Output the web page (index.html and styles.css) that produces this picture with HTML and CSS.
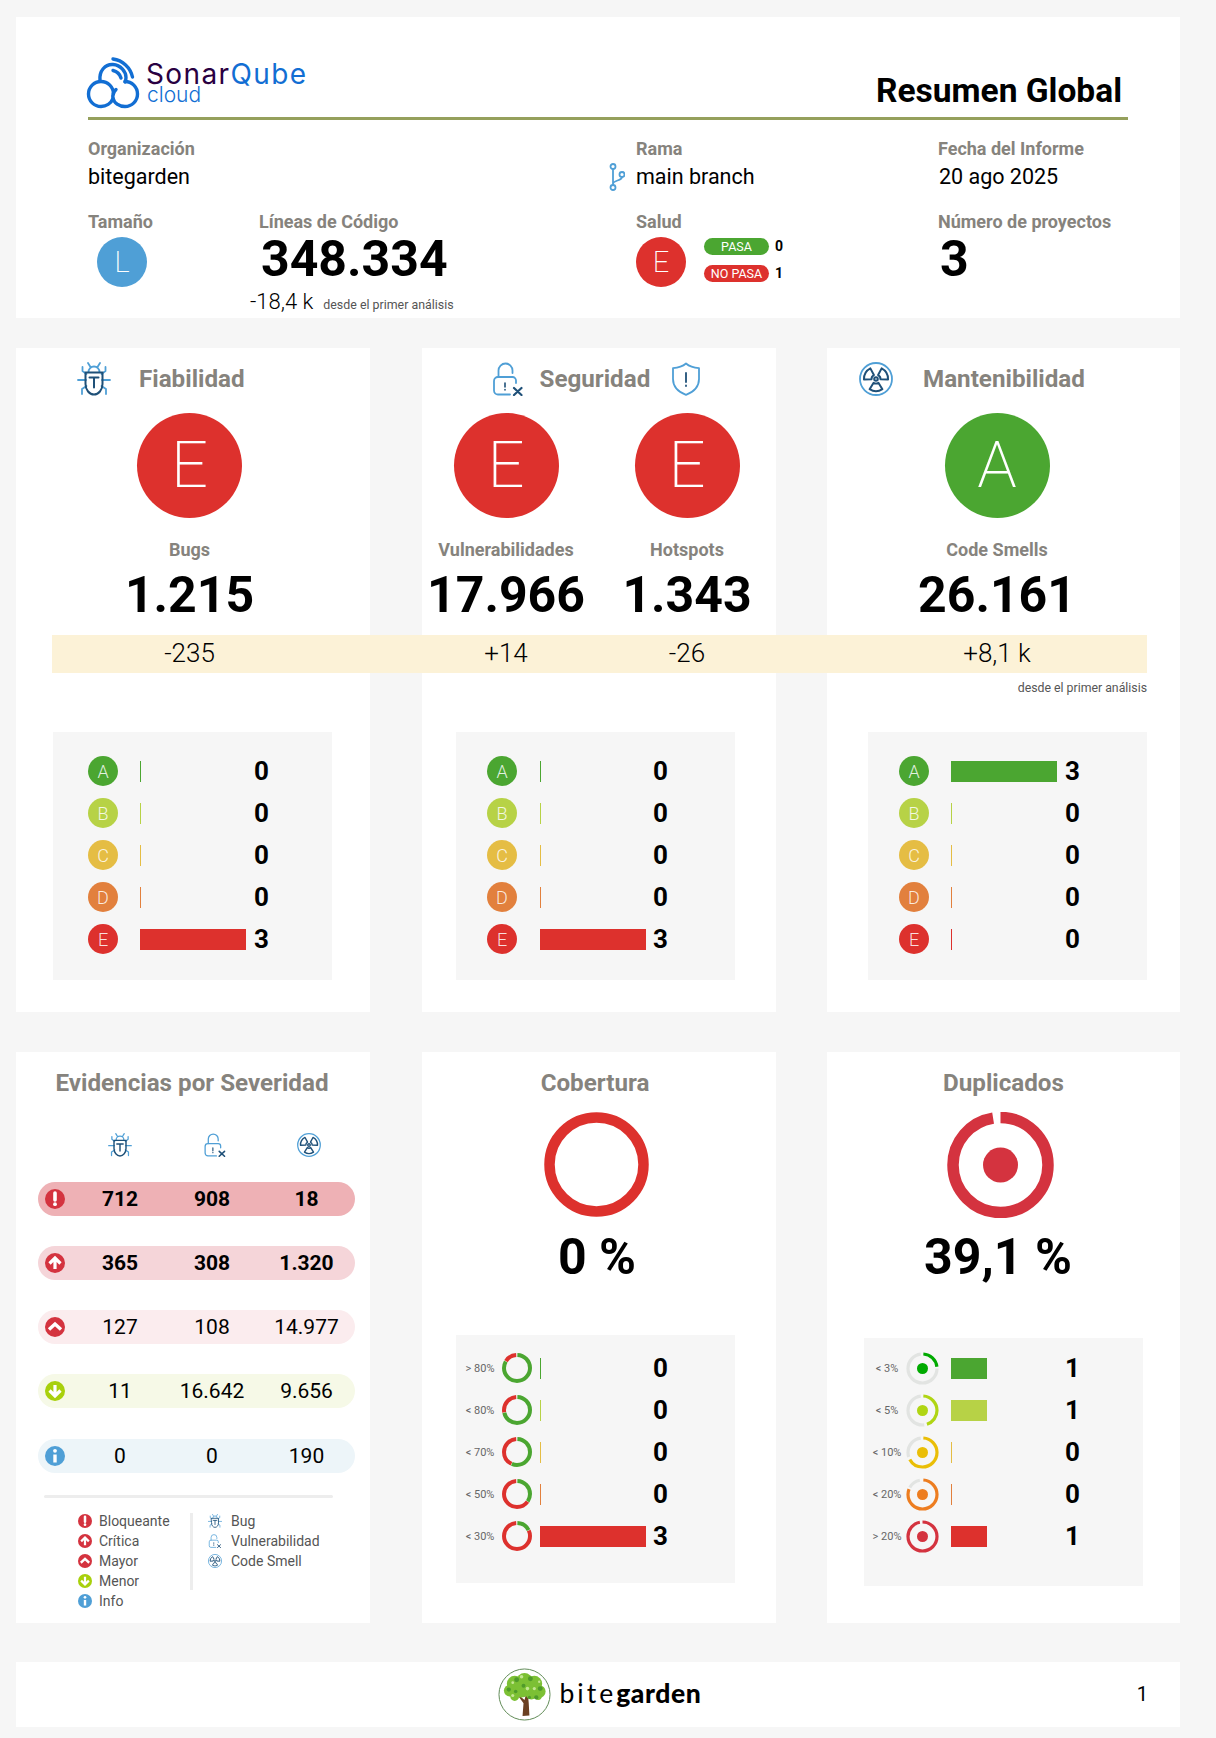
FILE: index.html
```html
<!DOCTYPE html>
<html lang="es">
<head>
<meta charset="utf-8">
<title>Resumen Global</title>
<link rel="stylesheet" href="styles.css">
</head>
<body>
<svg class="defs" width="0" height="0" aria-hidden="true">
  <symbol id="bug" viewBox="0 0 34 34">
    <g fill="none" stroke="#4f9fd6" stroke-width="1.8" stroke-linecap="round" stroke-linejoin="round">
      <path d="M11 1l2.5 4M23 1l-2.5 4M11.5 10a5.5 5.5 0 0 1 11 0"/>
      <path d="M9.500 12L5.500 9V5M24.500 12l4-3V5M9 18H1M25 18h8M9.500 24l-4.500 3v5M24.500 24l4.500 3v5"/>
    </g>
    <g fill="none" stroke="#1f5078" stroke-width="2" stroke-linecap="round" stroke-linejoin="round">
      <path d="M8.500 10.500h17V22c0 6-4 10.500-8.500 10.500S8.500 28 8.500 22z"/>
      <path d="M12.500 15.500h9M17 15.500v10"/>
    </g>
  </symbol>
  <symbol id="lock" viewBox="0 0 30 34">
    <g fill="none" stroke="#4f9fd6" stroke-width="1.800" stroke-linecap="round">
      <path d="M5.500 15V8.500a7 7 0 0 1 14 0V11"/>
      <path d="M17 32.500H5a4 4 0 0 1-4-4V19a4 4 0 0 1 4-4h14.500a3.500 3.500 0 0 1 3.500 3.500V21"/>
    </g>
    <path d="M12 21v4M12 27.500v.5" fill="none" stroke="#1f5078" stroke-width="1.600" stroke-linecap="round"/>
    <path d="M21 26l7.500 7M28.500 26L21 33" fill="none" stroke="#1f5078" stroke-width="2.200" stroke-linecap="round"/>
  </symbol>
  <symbol id="shield" viewBox="0 0 30 34">
    <path d="M15 1.500c3 2.600 8 4.300 13 4.600V17c0 7.500-5.600 13-13 15.800C7.600 30 2 24.500 2 17V6.100c5-.3 10-2 13-4.600z" fill="none" stroke="#4f9fd6" stroke-width="1.800" stroke-linejoin="round"/>
    <path d="M15 11v9M15 23.500v.5" fill="none" stroke="#1f5078" stroke-width="1.800" stroke-linecap="round"/>
  </symbol>
  <symbol id="smell" viewBox="0 0 34 34">
    <circle cx="17" cy="17" r="16" fill="none" stroke="#4f9fd6" stroke-width="1.800"/>
    <g fill="none" stroke="#1f5078" stroke-width="2" stroke-linejoin="round">
      <path d="M19.400 20.800L23.400 27.200A12 12 0 0 1 10.600 27.200L14.600 20.800A4.500 4.500 0 0 0 19.400 20.800Z"/>
      <path transform="rotate(120 17 17)" d="M19.400 20.800L23.400 27.200A12 12 0 0 1 10.600 27.200L14.600 20.800A4.500 4.500 0 0 0 19.400 20.800Z"/>
      <path transform="rotate(240 17 17)" d="M19.400 20.800L23.400 27.200A12 12 0 0 1 10.600 27.200L14.600 20.800A4.500 4.500 0 0 0 19.400 20.800Z"/>
      <circle cx="17" cy="17" r="1.800"/>
    </g>
  </symbol>
  <symbol id="sev-blocker" viewBox="0 0 20 20">
    <circle cx="10" cy="10" r="10" fill="#d4333f"/>
    <path d="M10 4v7" stroke="#fff" stroke-width="3.600" stroke-linecap="round"/>
    <circle cx="10" cy="15.200" r="1.900" fill="#fff"/>
  </symbol>
  <symbol id="sev-critical" viewBox="0 0 20 20">
    <circle cx="10" cy="10" r="10" fill="#d4333f"/>
    <path d="M4.500 10.500L10 5l5.500 5.500M10 6v10" fill="none" stroke="#fff" stroke-width="3.200"/>
  </symbol>
  <symbol id="sev-major" viewBox="0 0 20 20">
    <circle cx="10" cy="10" r="10" fill="#d4333f"/>
    <path d="M4 12.500L10 7l6 5.500" fill="none" stroke="#fff" stroke-width="3.400"/>
  </symbol>
  <symbol id="sev-minor" viewBox="0 0 20 20">
    <circle cx="10" cy="10" r="10" fill="#a8d00c"/>
    <path d="M4.500 9.500L10 15l5.500-5.500M10 14V4" fill="none" stroke="#fff" stroke-width="3.200"/>
  </symbol>
  <symbol id="sev-info" viewBox="0 0 20 20">
    <circle cx="10" cy="10" r="10" fill="#4f9fd6"/>
    <circle cx="10" cy="4.800" r="1.900" fill="#fff"/>
    <path d="M10 8.500v8" stroke="#fff" stroke-width="3.400"/>
  </symbol>
</svg>

<header class="card head">
  <div class="brand">
    <div class="logo">
      <svg class="cloud" viewBox="0 0 50 51" aria-hidden="true">
        <g fill="none" stroke="#126ed3" stroke-width="3.400" stroke-linecap="round">
          <path d="M25 2A23 23 0 0 1 44.500 20"/>
          <path d="M25 13.500A11 11 0 0 1 33 21"/>
          <path d="M12 23.500C11 14 17 7 25 7.500c8 .5 13 7.500 13 13 0 1.500-.3 3-1 4.500"/>
          <path d="M25.500 37a12.500 12.500 0 1 0-12.500 12.500c5 0 10-3 12-8"/>
          <path d="M37 24.500a12.500 12.500 0 1 1 0 25c-6 0-11-3.500-12-8.500 -.6-3 .5-6 3-8.500"/>
        </g>
      </svg>
      <div class="wordmark">
        <div class="sq"><span class="sonar">Sonar</span><span class="qube">Qube</span></div>
        <div class="sq-cloud">cloud</div>
      </div>
    </div>
    <h1 class="title">Resumen Global</h1>
  </div>
  <div class="meta">
    <div class="meta-org">
      <div class="label">Organización</div>
      <div class="value">bitegarden</div>
    </div>
    <div class="meta-branch">
      <div class="label">Rama</div>
      <div class="value branch-value">
        <svg class="branch" viewBox="0 0 16 28" aria-hidden="true">
          <g fill="none" stroke="#4f9fd6" stroke-width="1.800">
            <circle cx="4" cy="3.500" r="2.500"/>
            <circle cx="4" cy="24.500" r="2.500"/>
            <circle cx="13" cy="11.500" r="2.500"/>
            <path d="M4 6v16M4 21c0-4 9-3 9-7"/>
          </g>
        </svg>
        main branch
      </div>
    </div>
    <div class="meta-date">
      <div class="label">Fecha del Informe</div>
      <div class="value date-value">20 ago 2025</div>
    </div>

    <div class="meta-size">
      <div class="label">Tamaño</div>
      <div class="badge-circle size-l">L</div>
    </div>
    <div class="meta-lines">
      <div class="label">Líneas de Código</div>
      <div class="big lines-big">348.334</div>
      <div class="lines-delta"><span class="delta-num">-18,4 k</span><span class="since">desde el primer análisis</span></div>
    </div>
    <div class="meta-health">
      <div class="label">Salud</div>
      <div class="health">
        <div class="badge-circle e">E</div>
        <div class="gates">
          <div class="gate"><span class="pill a">PASA</span><b>0</b></div>
          <div class="gate"><span class="pill e">NO PASA</span><b>1</b></div>
        </div>
      </div>
    </div>
    <div class="meta-projects">
      <div class="label">Número de proyectos</div>
      <div class="big projects-big">3</div>
    </div>
  </div>
</header>

<section class="metrics">
  <div class="strip"></div>

  <article class="card metric">
    <div class="metric-title t1">
      <svg class="ico" aria-hidden="true"><use href="#bug"/></svg>
      <h2>Fiabilidad</h2>
    </div>
    <div class="scores s1">
      <div class="score">
        <div class="grade-big e">E</div>
        <div class="label">Bugs</div>
        <div class="big">1.215</div>
        <div class="delta">-235</div>
      </div>
    </div>
    <div class="panel p1">
      <div class="row"><span class="grade a">A</span><span class="track"><i class="bar a"></i></span><b class="val">0</b></div>
      <div class="row"><span class="grade b">B</span><span class="track"><i class="bar b"></i></span><b class="val">0</b></div>
      <div class="row"><span class="grade c">C</span><span class="track"><i class="bar c"></i></span><b class="val">0</b></div>
      <div class="row"><span class="grade d">D</span><span class="track"><i class="bar d"></i></span><b class="val">0</b></div>
      <div class="row"><span class="grade e">E</span><span class="track"><i class="bar e full"></i></span><b class="val">3</b></div>
    </div>
  </article>

  <article class="card metric">
    <div class="metric-title t2">
      <svg class="ico lock-ico" aria-hidden="true"><use href="#lock"/></svg>
      <h2>Seguridad</h2>
      <svg class="ico shield-ico" aria-hidden="true"><use href="#shield"/></svg>
    </div>
    <div class="scores s2">
      <div class="score">
        <div class="grade-big e">E</div>
        <div class="label">Vulnerabilidades</div>
        <div class="big">17.966</div>
        <div class="delta">+14</div>
      </div>
      <div class="score">
        <div class="grade-big e">E</div>
        <div class="label">Hotspots</div>
        <div class="big">1.343</div>
        <div class="delta">-26</div>
      </div>
    </div>
    <div class="panel p2">
      <div class="row"><span class="grade a">A</span><span class="track"><i class="bar a"></i></span><b class="val">0</b></div>
      <div class="row"><span class="grade b">B</span><span class="track"><i class="bar b"></i></span><b class="val">0</b></div>
      <div class="row"><span class="grade c">C</span><span class="track"><i class="bar c"></i></span><b class="val">0</b></div>
      <div class="row"><span class="grade d">D</span><span class="track"><i class="bar d"></i></span><b class="val">0</b></div>
      <div class="row"><span class="grade e">E</span><span class="track"><i class="bar e full"></i></span><b class="val">3</b></div>
    </div>
  </article>

  <article class="card metric">
    <div class="metric-title t3">
      <svg class="ico" aria-hidden="true"><use href="#smell"/></svg>
      <h2>Mantenibilidad</h2>
    </div>
    <div class="scores s3">
      <div class="score">
        <div class="grade-big a">A</div>
        <div class="label">Code Smells</div>
        <div class="big">26.161</div>
        <div class="delta">+8,1 k</div>
      </div>
    </div>
    <div class="note">desde el primer análisis</div>
    <div class="panel p3">
      <div class="row"><span class="grade a">A</span><span class="track"><i class="bar a full"></i></span><b class="val">3</b></div>
      <div class="row"><span class="grade b">B</span><span class="track"><i class="bar b"></i></span><b class="val">0</b></div>
      <div class="row"><span class="grade c">C</span><span class="track"><i class="bar c"></i></span><b class="val">0</b></div>
      <div class="row"><span class="grade d">D</span><span class="track"><i class="bar d"></i></span><b class="val">0</b></div>
      <div class="row"><span class="grade e">E</span><span class="track"><i class="bar e"></i></span><b class="val">0</b></div>
    </div>
  </article>
</section>

<section class="lower">
  <article class="card severity">
    <h2 class="lower-title sev-title">Evidencias por Severidad</h2>
    <div class="sev-grid sev-icons">
      <span></span>
      <svg class="sev-type" aria-hidden="true"><use href="#bug"/></svg>
      <svg class="sev-type" aria-hidden="true"><use href="#lock"/></svg>
      <svg class="sev-type" aria-hidden="true"><use href="#smell"/></svg>
    </div>
    <div class="pills">
      <div class="sev-grid sev-pill blocker strong"><svg class="sev-dot" aria-hidden="true"><use href="#sev-blocker"/></svg><span>712</span><span>908</span><span>18</span></div>
      <div class="sev-grid sev-pill critical strong"><svg class="sev-dot" aria-hidden="true"><use href="#sev-critical"/></svg><span>365</span><span>308</span><span>1.320</span></div>
      <div class="sev-grid sev-pill major"><svg class="sev-dot" aria-hidden="true"><use href="#sev-major"/></svg><span>127</span><span>108</span><span>14.977</span></div>
      <div class="sev-grid sev-pill minor"><svg class="sev-dot" aria-hidden="true"><use href="#sev-minor"/></svg><span>11</span><span>16.642</span><span>9.656</span></div>
      <div class="sev-grid sev-pill info"><svg class="sev-dot" aria-hidden="true"><use href="#sev-info"/></svg><span>0</span><span>0</span><span>190</span></div>
    </div>
    <div class="sev-rule"></div>
    <div class="legend">
      <ul class="legend-col left">
        <li><svg aria-hidden="true"><use href="#sev-blocker"/></svg>Bloqueante</li>
        <li><svg aria-hidden="true"><use href="#sev-critical"/></svg>Crítica</li>
        <li><svg aria-hidden="true"><use href="#sev-major"/></svg>Mayor</li>
        <li><svg aria-hidden="true"><use href="#sev-minor"/></svg>Menor</li>
        <li><svg aria-hidden="true"><use href="#sev-info"/></svg>Info</li>
      </ul>
      <div class="legend-sep"></div>
      <ul class="legend-col right">
        <li><svg aria-hidden="true"><use href="#bug"/></svg>Bug</li>
        <li><svg aria-hidden="true"><use href="#lock"/></svg>Vulnerabilidad</li>
        <li><svg aria-hidden="true"><use href="#smell"/></svg>Code Smell</li>
      </ul>
    </div>
  </article>

  <article class="card gauge">
    <h2 class="lower-title cov-title">Cobertura</h2>
    <svg class="big-ring cov-ring" viewBox="0 0 105 105" aria-hidden="true">
      <circle cx="52.500" cy="52.500" r="47" fill="none" stroke="#dd312d" stroke-width="10.500"/>
    </svg>
    <div class="big pct cov-pct">0 %</div>
    <div class="panel cov-panel">
      <div class="row"><span class="range">&gt; 80%</span>
        <svg class="mini" viewBox="0 0 30 30" aria-hidden="true"><g transform="rotate(-90 15 15)" fill="none" stroke-width="4"><circle cx="15" cy="15" r="13" pathLength="100" stroke="#dd312d" stroke-dasharray="15 85" stroke-dashoffset="-84"/><circle cx="15" cy="15" r="13" pathLength="100" stroke="#4ba631" stroke-dasharray="83 17" stroke-dashoffset="-.5"/></g></svg>
        <span class="track"><i class="bar a"></i></span><b class="val">0</b></div>
      <div class="row"><span class="range">&lt; 80%</span>
        <svg class="mini" viewBox="0 0 30 30" aria-hidden="true"><g transform="rotate(-90 15 15)" fill="none" stroke-width="4"><circle cx="15" cy="15" r="13" pathLength="100" stroke="#dd312d" stroke-dasharray="27 73" stroke-dashoffset="-72"/><circle cx="15" cy="15" r="13" pathLength="100" stroke="#4ba631" stroke-dasharray="71 29" stroke-dashoffset="-.5"/></g></svg>
        <span class="track"><i class="bar b"></i></span><b class="val">0</b></div>
      <div class="row"><span class="range">&lt; 70%</span>
        <svg class="mini" viewBox="0 0 30 30" aria-hidden="true"><g transform="rotate(-90 15 15)" fill="none" stroke-width="4"><circle cx="15" cy="15" r="13" pathLength="100" stroke="#dd312d" stroke-dasharray="42 58" stroke-dashoffset="-57"/><circle cx="15" cy="15" r="13" pathLength="100" stroke="#4ba631" stroke-dasharray="56 44" stroke-dashoffset="-.5"/></g></svg>
        <span class="track"><i class="bar c"></i></span><b class="val">0</b></div>
      <div class="row"><span class="range">&lt; 50%</span>
        <svg class="mini" viewBox="0 0 30 30" aria-hidden="true"><g transform="rotate(-90 15 15)" fill="none" stroke-width="4"><circle cx="15" cy="15" r="13" pathLength="100" stroke="#dd312d" stroke-dasharray="64 36" stroke-dashoffset="-35"/><circle cx="15" cy="15" r="13" pathLength="100" stroke="#4ba631" stroke-dasharray="34 66" stroke-dashoffset="-.5"/></g></svg>
        <span class="track"><i class="bar d"></i></span><b class="val">0</b></div>
      <div class="row"><span class="range">&lt; 30%</span>
        <svg class="mini" viewBox="0 0 30 30" aria-hidden="true"><g transform="rotate(-90 15 15)" fill="none" stroke-width="4"><circle cx="15" cy="15" r="13" pathLength="100" stroke="#dd312d" stroke-dasharray="81 19" stroke-dashoffset="-18"/><circle cx="15" cy="15" r="13" pathLength="100" stroke="#4ba631" stroke-dasharray="17 83" stroke-dashoffset="-.5"/></g></svg>
        <span class="track"><i class="bar e full"></i></span><b class="val">3</b></div>
    </div>
  </article>

  <article class="card gauge">
    <h2 class="lower-title">Duplicados</h2>
    <svg class="big-ring dup-ring" viewBox="0 0 107 106" aria-hidden="true">
      <g transform="rotate(-90 53.500 53)" fill="none" stroke-width="11.500">
        <circle cx="53.500" cy="53" r="47.500" pathLength="100" stroke="#d4333f" stroke-dasharray="97.500 2.500"/>
      </g>
      <circle cx="53.500" cy="53" r="17.500" fill="#d4333f"/>
    </svg>
    <div class="big pct dup-pct">39,1 %</div>
    <div class="panel dup-panel">
      <div class="row"><span class="range">&lt; 3%</span>
        <svg class="mini dupe" viewBox="0 0 33 33" aria-hidden="true"><g transform="rotate(-90 16.500 16.500)" fill="none" stroke-width="3.200"><circle cx="16.500" cy="16.500" r="14.500" pathLength="100" stroke="#e2e4e2" stroke-dasharray="73 27" stroke-dashoffset="-25"/><circle cx="16.500" cy="16.500" r="14.500" pathLength="100" stroke="#00aa00" stroke-dasharray="22 78" stroke-dashoffset="-1"/></g><circle cx="16.500" cy="16.500" r="5.500" fill="#00aa00"/></svg>
        <span class="track"><i class="bar a third"></i></span><b class="val">1</b></div>
      <div class="row"><span class="range">&lt; 5%</span>
        <svg class="mini dupe" viewBox="0 0 33 33" aria-hidden="true"><g transform="rotate(-90 16.500 16.500)" fill="none" stroke-width="3.200"><circle cx="16.500" cy="16.500" r="14.500" pathLength="100" stroke="#e2e4e2" stroke-dasharray="50 50" stroke-dashoffset="-48"/><circle cx="16.500" cy="16.500" r="14.500" pathLength="100" stroke="#b0d513" stroke-dasharray="44 56" stroke-dashoffset="-1"/></g><circle cx="16.500" cy="16.500" r="5.500" fill="#b0d513"/></svg>
        <span class="track"><i class="bar b third"></i></span><b class="val">1</b></div>
      <div class="row"><span class="range">&lt; 10%</span>
        <svg class="mini dupe" viewBox="0 0 33 33" aria-hidden="true"><g transform="rotate(-90 16.500 16.500)" fill="none" stroke-width="3.200"><circle cx="16.500" cy="16.500" r="14.500" pathLength="100" stroke="#e2e4e2" stroke-dasharray="28 72" stroke-dashoffset="-70"/><circle cx="16.500" cy="16.500" r="14.500" pathLength="100" stroke="#eabe06" stroke-dasharray="66 34" stroke-dashoffset="-1"/></g><circle cx="16.500" cy="16.500" r="5.500" fill="#eabe06"/></svg>
        <span class="track"><i class="bar c"></i></span><b class="val">0</b></div>
      <div class="row"><span class="range">&lt; 20%</span>
        <svg class="mini dupe" viewBox="0 0 33 33" aria-hidden="true"><g transform="rotate(-90 16.500 16.500)" fill="none" stroke-width="3.200"><circle cx="16.500" cy="16.500" r="14.500" pathLength="100" stroke="#e2e4e2" stroke-dasharray="14 86" stroke-dashoffset="-83"/><circle cx="16.500" cy="16.500" r="14.500" pathLength="100" stroke="#ed7d20" stroke-dasharray="80 20" stroke-dashoffset="-1"/></g><circle cx="16.500" cy="16.500" r="5.500" fill="#ed7d20"/></svg>
        <span class="track"><i class="bar d"></i></span><b class="val">0</b></div>
      <div class="row"><span class="range">&gt; 20%</span>
        <svg class="mini dupe" viewBox="0 0 33 33" aria-hidden="true"><g transform="rotate(-90 16.500 16.500)" fill="none" stroke-width="3.200"><circle cx="16.500" cy="16.500" r="14.500" pathLength="100" stroke="#d4333f" stroke-dasharray="97 3"/></g><circle cx="16.500" cy="16.500" r="5.500" fill="#d4333f"/></svg>
        <span class="track"><i class="bar e third"></i></span><b class="val">1</b></div>
    </div>
  </article>
</section>

<footer class="card foot">
  <svg class="tree" viewBox="0 0 54 54" aria-hidden="true">
    <circle cx="27" cy="27" r="26" fill="#fff" stroke="#5f8a55" stroke-width="1"/>
    <path d="M25 49l1-13-5-7 1-.8 5 4.500 1-4-3-5 1-.5 3.500 4.500 4-5 .8.700-3.500 6.800 .5 5.500 .7 12.800z" fill="#6b4022"/>
    <g fill="#7cc034">
      <circle cx="27" cy="13" r="8"/><circle cx="17" cy="16" r="8"/><circle cx="37" cy="16" r="8"/>
      <circle cx="12" cy="23" r="6"/><circle cx="42" cy="24" r="6.500"/><circle cx="24" cy="22" r="8"/>
      <circle cx="34" cy="26" r="6"/><circle cx="17" cy="29" r="4.500"/><circle cx="41" cy="29" r="3.500"/>
    </g>
    <g fill="#4f9a2a">
      <circle cx="19" cy="12" r="2.500"/><circle cx="33" cy="11" r="2.500"/><circle cx="11" cy="22" r="2.200"/>
      <circle cx="43" cy="21" r="2.500"/><circle cx="39" cy="30" r="2.200"/><circle cx="26" cy="18" r="2"/>
      <circle cx="18" cy="24" r="1.800"/><circle cx="32" cy="30" r="1.600"/>
    </g>
    <g fill="#c4e693">
      <circle cx="24" cy="9" r="1.800"/><circle cx="30" cy="21" r="1.800"/><circle cx="15" cy="28" r="1.600"/><circle cx="37" cy="21" r="1.600"/><circle cx="15" cy="15" r="1.400"/><circle cx="42" cy="14" r="1.200"/>
    </g>
  </svg>
  <div class="bg-word"><span class="bite">bite</span><span class="garden">garden</span></div>
  <div class="page-no">1</div>
</footer>
</body>
</html>
```

FILE: styles.css
```css
* { box-sizing: border-box; }
html, body { margin: 0; padding: 0; }
body {
  width: 1216px;
  height: 1738px;
  padding: 17px 36px 0 16px;
  background: #f6f6f6;
  font-family: Roboto, "Liberation Sans", sans-serif;
  color: #000;
  overflow: hidden;
}
h1, h2, ul { margin: 0; padding: 0; }
ul { list-style: none; }
.defs { position: absolute; }
.card { background: #fff; }

.a { background: #4ba631; }
.b { background: #b7d246; }
.c { background: #e5bd44; }
.d { background: #e2803d; }
.e { background: #dd312d; }

.label { font-size: 18px; line-height: 20px; font-weight: 700; color: #86837d; }
.big { font-size: 50px; line-height: 50px; font-weight: 700; }

/* header */
.head { height: 301px; padding: 40px 52px 0 72px; }
.brand {
  height: 62.500px;
  display: flex;
  justify-content: space-between;
  align-items: flex-start;
  border-bottom: 3px solid #95a05c;
}
.logo { display: flex; gap: 8px; }
.cloud { width: 50px; height: 51px; overflow: visible; }
.wordmark { padding-top: 4px; }
.sq { font-family: Inter, sans-serif; font-size: 28px; line-height: 26px; font-weight: 400; letter-spacing: 1.400px; }
.sonar { color: #290042; }
.qube { color: #126ed3; }
.sq-cloud { margin-left: 1px; font-family: Inter, sans-serif; font-size: 21px; line-height: 16px; font-weight: 300; color: #126ed3; }
.title { margin: 14px 6px 0 0; font-size: 33.500px; line-height: 40px; font-weight: 700; }

.meta {
  display: grid;
  grid-template-columns: 171px 377px 302px 1fr;
  margin-top: 19px;
  row-gap: 21px;
}
.meta-org { grid-column: 1 / span 2; }
.value { margin-top: 4px; font-size: 21.500px; line-height: 28px; }
.branch-value { display: flex; align-items: center; }
.branch { width: 16px; height: 28px; margin-left: -27px; margin-right: 11px; }
.date-value { padding-left: 1px; }
.badge-circle {
  width: 50px; height: 50px; margin-top: 5px; border-radius: 50%;
  display: flex; align-items: center; justify-content: center;
  color: #fff; font-size: 29px; font-weight: 200;
}
.size-l { margin-left: 9px; background: #4f9fd6; }
.lines-big { margin: 2px 0 0 2px; }
.lines-delta { display: flex; align-items: baseline; margin: 5px 0 0 -9px; }
.delta-num { font-size: 22px; line-height: 26px; font-weight: 300; }
.since { margin-left: 10px; font-size: 12.400px; color: #555; }
.health { display: flex; }
.gates { margin: 6px 0 0 18px; display: flex; flex-direction: column; gap: 10px; }
.gate { display: flex; align-items: center; gap: 6px; font-size: 14px; height: 17px; }
.pill {
  width: 65px; height: 17px; border-radius: 9px;
  color: #fff; font-size: 12.500px; line-height: 17px; text-align: center;
}
.projects-big { margin: 2px 0 0 2px; }

/* metric cards */
.metrics {
  position: relative;
  display: grid;
  grid-template-columns: 354px 354px 353px;
  gap: 51.500px;
  margin-top: 30px;
  height: 664px;
}
.strip {
  position: absolute;
  left: 36px; right: 33px; top: 287px;
  height: 38px;
  background: #fcf2d7;
  z-index: 1;
}
.metric { display: flex; flex-direction: column; padding: 14px 0 32px; }
.metric-title { display: flex; align-items: center; height: 33px; }
.metric-title h2, .lower-title { font-size: 24.200px; line-height: 30px; font-weight: 700; color: #86837d; }
.ico { width: 34px; height: 34px; flex: none; }
.t1 { padding-left: 61px; gap: 28px; }
.t2 { padding-left: 71px; }
.lock-ico { width: 30px; margin-right: 17px; }
.shield-ico { width: 30px; margin-left: 21px; }
.t3 { padding-left: 32px; gap: 30px; }

.scores { display: flex; justify-content: center; margin-top: 17.500px; }
.s1 { padding-right: 7px; }
.s2 { gap: 21px; padding-right: 4px; }
.s3 { padding-right: 13px; }
.score { width: 160px; display: flex; flex-direction: column; align-items: center; }
.grade-big {
  width: 105px; height: 105px; border-radius: 50%;
  display: flex; align-items: center; justify-content: center;
  color: #fff; font-size: 65px; line-height: 1; font-weight: 200;
}
.score .label { margin-top: 21px; line-height: 22px; }
.score .big { margin-top: 9px; }
.delta { position: relative; z-index: 2; margin-top: 16px; height: 38px; font-size: 26px; line-height: 34px; font-weight: 300; }
.note { margin-top: 6px; padding-right: 33px; text-align: right; font-size: 12.300px; line-height: 16px; color: #555; }

.panel { width: 279px; background: #f6f6f6; margin-top: auto; }
.p1 { margin-left: 37px; padding: 18px 0 20px 35px; }
.p2 { margin-left: 34.500px; padding: 18px 0 20px 31px; }
.p3 { margin-left: 41px; padding: 18px 0 20px 31px; }
.p2 .grade { margin-right: 23px; }
.p2 .track { margin-right: 7px; }
.row { display: flex; align-items: center; height: 42px; }
.grade {
  width: 30px; height: 30px; border-radius: 50%; flex: none; margin-right: 22px;
  display: flex; align-items: center; justify-content: center;
  color: rgba(255,255,255,.85); font-size: 18px; font-weight: 300;
}
.track { width: 106px; flex: none; margin-right: 8px; height: 21px; }
.bar { display: block; width: 1px; height: 21px; }
.bar.full { width: 100%; }
.bar.third { width: 36px; }
.val { font-size: 26px; line-height: 30px; font-weight: 700; }

/* lower row */
.lower {
  display: grid;
  grid-template-columns: 354px 354px 353px;
  gap: 51.500px;
  margin-top: 40px;
  height: 571px;
}
.lower-title { padding-top: 16px; text-align: center; }
.sev-title { padding-right: 2px; }
.cov-title { padding-right: 7px; }
.sev-grid {
  display: grid;
  grid-template-columns: 36px 92px 92px 1fr;
  align-items: center;
  justify-items: center;
  width: 317px;
  margin-left: 22px;
}
.sev-icons { margin-top: 35px; height: 21px; grid-template-columns: 35px 94px 95px 1fr; }
.sev-type { width: 24px; height: 24px; }
.pills { margin-top: 27.500px; display: flex; flex-direction: column; gap: 30.250px; }
.sev-pill { height: 34px; border-radius: 17px; font-size: 21px; line-height: 32px; }
.sev-pill span { height: 32px; }
.strong { font-weight: 700; }
.sev-dot { width: 20px; height: 20px; justify-self: start; margin-left: 7px; }
.blocker { background: #eeb1b5; }
.critical { background: #f5d5d9; }
.major { background: #fbecee; }
.minor { background: #f6f9e7; }
.info { background: #edf5f9; }
.sev-rule { width: 289px; height: 3px; margin: 22.500px 0 0 28px; background: #ededed; border-radius: 2px; }
.legend { display: flex; margin: 12.500px 0 0 62px; }
.legend-col li { display: flex; align-items: center; height: 20px; font-size: 14px; color: #555; }
.legend-col svg { width: 14px; height: 14px; flex: none; }
.left { width: 112px; }
.left svg { margin-right: 7px; }
.right { margin-left: 15px; }
.right svg { margin-right: 9px; }
.legend-sep { width: 3px; height: 77px; margin-top: 2px; background: #ededed; }

.gauge { display: flex; flex-direction: column; }
.big-ring { display: block; flex: none; margin-top: 14px; }
.cov-ring { width: 105px; height: 105px; margin-left: 122.500px; }
.dup-ring { width: 107px; height: 106px; margin-left: 120px; }
.pct { text-align: center; }
.cov-pct { margin-top: 15px; padding-right: 3px; }
.dup-pct { margin-top: 14px; padding-right: 11px; }
.cov-panel { margin: 53px 0 0 34.500px; padding: 12px 0 26px 5px; }
.cov-panel .track { margin-right: 7px; }
.dup-panel { margin: 56px 0 0 37px; padding: 9px 0 29px 4px; }
.range { width: 38px; flex: none; text-align: center; font-size: 11px; color: #666; }
.mini { width: 30px; height: 30px; flex: none; margin: 0 8px 0 3px; }
.mini.dupe { width: 33px; height: 33px; margin: 0 12px 0 0; }

/* footer */
.foot {
  position: relative;
  display: flex;
  align-items: center;
  justify-content: center;
  height: 65px;
  margin-top: 39px;
  gap: 9px;
}
.tree { width: 53px; height: 53px; flex: none; margin-left: 3px; }
.bg-word { font-family: Lato, sans-serif; font-size: 26.500px; line-height: 30px; margin-top: -4px; }
.bite { font-weight: 400; letter-spacing: 3px; }
.garden { font-weight: 900; letter-spacing: .6px; }
.page-no { position: absolute; right: 32px; top: 20px; font-size: 20px; line-height: 24px; }
```
